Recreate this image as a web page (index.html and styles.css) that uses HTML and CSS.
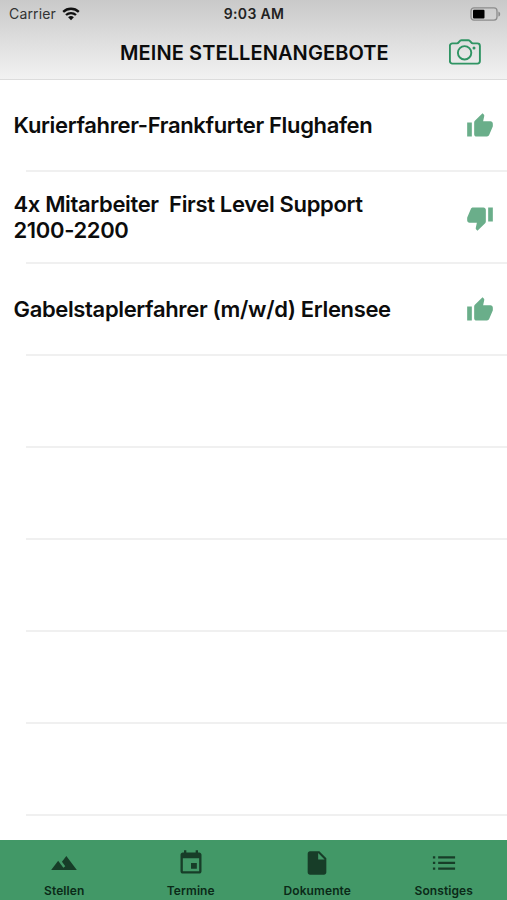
FILE: index.html
```
<!DOCTYPE html>
<html lang="de">
<head>
  <meta charset="UTF-8">
  <meta name="viewport" content="width=device-width, initial-scale=1.0">
  <title>Meine Stellenangebote</title>
  <link rel="stylesheet" href="styles.css">
</head>
<body>
  <header class="header">
    <div class="status-bar">
      <div class="carrier">
        <span>Carrier</span>
        <svg viewBox="0 0 18 14" width="18" height="14">
          <path d="M1.2 4.9C5.6.7 12.4.7 16.8 4.9M4 8C6.8 5.4 11.2 5.4 14 8" fill="none" stroke="#111" stroke-width="2.3"/>
          <path d="M9 13.3 6.1 10.3a4.2 4.2 0 0 1 5.8 0z" fill="#111"/>
        </svg>
      </div>
      <span class="time">9:03 AM</span>
      <svg class="battery" viewBox="0 0 31 14" width="31" height="14">
        <rect x="1" y="0.9" width="26" height="12.2" rx="3" fill="none" stroke="#8c8c8c" stroke-width="1.3"/>
        <rect x="3" y="2.7" width="11.5" height="8.8" rx="1" fill="#000"/>
        <path d="M28.4 4.4c2.4.7 2.4 4.5 0 5.2z" fill="#8c8c8c"/>
      </svg>
    </div>
    <div class="title-bar">
      <h1>MEINE STELLENANGEBOTE</h1>
      <svg viewBox="0 0 32 26" width="32" height="26" fill="none" stroke="#2f9463" stroke-width="1.9">
        <path d="M3.4 4.4H8c2 0 2.2-3.2 4.4-3.2h7c2.2 0 2.4 3.2 4.4 3.2h4.6a2.5 2.5 0 0 1 2.5 2.5v15.2a2.5 2.5 0 0 1-2.5 2.5h-25a2.5 2.5 0 0 1-2.500-2.500V6.900a2.500 2.500 0 0 1 2.500-2.500z"/>
        <circle cx="15.6" cy="13.8" r="6.7"/>
        <circle cx="25" cy="8.9" r="1.5" fill="#2f9463" stroke="none"/>
      </svg>
    </div>
  </header>

  <!-- Job list -->
  <ul class="job-list">
    <li class="job">
      <span class="job-title">Kurierfahrer-Frankfurter Flughafen</span>
      <svg class="thumb" viewBox="0 0 24 24">
        <path d="M1 21h4V9H1v12zm22-11c0-1.100-.9-2-2-2h-6.310l.95-4.570.03-.32c0-.41-.17-.79-.44-1.060L14.170 1 7.590 7.590C7.220 7.950 7 8.450 7 9v10c0 1.100.9 2 2 2h9c.83 0 1.540-.5 1.840-1.220l3.020-7.050c.09-.23.14-.47.14-.73v-2z"/>
      </svg>
    </li>
    <li class="job">
      <span class="job-title">4x Mitarbeiter&nbsp; First Level Support<br>2100-2200</span>
      <svg class="thumb" viewBox="0 0 24 24">
        <path d="M15 3H6c-.83 0-1.540.5-1.840 1.220l-3.020 7.050c-.09.23-.14.47-.14.73v2c0 1.100.9 2 2 2h6.310l-.95 4.570-.03.32c0 .41.17.79.44 1.060L9.830 23l6.590-6.590c.36-.36.58-.86.58-1.410V5c0-1.100-.9-2-2-2zm4 0v12h4V3h-4z"/>
      </svg>
    </li>
    <li class="job">
      <span class="job-title">Gabelstaplerfahrer (m/w/d) Erlensee</span>
      <svg class="thumb" viewBox="0 0 24 24">
        <path d="M1 21h4V9H1v12zm22-11c0-1.100-.9-2-2-2h-6.310l.95-4.570.03-.32c0-.41-.17-.79-.44-1.060L14.170 1 7.590 7.590C7.220 7.950 7 8.450 7 9v10c0 1.100.9 2 2 2h9c.83 0 1.540-.5 1.840-1.220l3.020-7.050c.09-.23.14-.47.14-.73v-2z"/>
      </svg>
    </li>
    <li class="job"></li>
    <li class="job"></li>
    <li class="job"></li>
    <li class="job"></li>
    <li class="job"></li>
  </ul>

  <!-- Bottom navigation -->
  <nav class="tab-bar">
    <a class="tab">
      <svg viewBox="0 0 24 24"><path d="M14 6l-3.750 5 2.850 3.800-1.600 1.200C9.810 13.750 7 10 7 10l-6 8h22L14 6z"/></svg>
      <span>Stellen</span>
    </a>
    <a class="tab">
      <svg viewBox="0 0 24 24"><path d="M17 12h-5v5h5v-5zM16 1v2H8V1H6v2H5c-1.110 0-1.990.9-1.990 2L3 19c0 1.100.89 2 2 2h14c1.100 0 2-.9 2-2V5c0-1.100-.9-2-2-2h-1V1h-2zm3 18H5V8h14v11z"/></svg>
      <span>Termine</span>
    </a>
    <a class="tab">
      <svg viewBox="0 0 24 24"><path d="M6 2c-1.100 0-1.990.9-1.990 2L4 20c0 1.100.89 2 1.990 2H18c1.100 0 2-.9 2-2V8l-6-6H6zm7 7V3.500L18.500 9H13z"/></svg>
      <span>Dokumente</span>
    </a>
    <a class="tab">
      <svg viewBox="0 0 24 24"><path d="M2.500 6.200h2v1.900h-2zM2.500 11h2v1.900h-2zM2.500 15.800h2v1.900h-2zM7 6.200h14.500v1.900H7zM7 11h14.500v1.900H7zM7 15.800h14.500v1.900H7z"/></svg>
      <span>Sonstiges</span>
    </a>
  </nav>
</body>
</html>
```

FILE: styles.css
```
* {
  box-sizing: border-box;
}
body {
  margin: 0;
  height: 900px;
  display: flex;
  flex-direction: column;
  overflow: hidden;
  background: #fff;
  color: #0c0c0c;
  font-family: Inter, "Liberation Sans", sans-serif;
}
.header {
  height: 80px;
  flex: none;
  background: linear-gradient(#c9c9c9, #f2f2f2);
  border-bottom: 1px solid #dcdcdc;
}
.status-bar {
  height: 27px;
  padding: 0 6px 0 9px;
  display: grid;
  grid-template-columns: 1fr auto 1fr;
  align-items: center;
  font-size: 14px;
}
.carrier {
  display: flex;
  align-items: center;
  gap: 6px;
  color: #333;
  letter-spacing: 0.15px;
}
.time {
  margin-right: 2px;
  font-weight: 600;
  letter-spacing: 0.3px;
  color: #222;
}
.battery {
  justify-self: end;
}
.title-bar {
  height: 52px;
  padding: 0 26px 2px 120px;
  display: flex;
  align-items: center;
  justify-content: space-between;
}
h1 {
  margin: 2px 0 0;
  font-size: 20px;
  font-weight: 600;
  letter-spacing: 0.1px;
  white-space: nowrap;
}
.job-list {
  flex: 1;
  min-height: 0;
  margin: 0;
  padding: 0;
  overflow: hidden;
  list-style: none;
}
.job {
  height: 92px;
  padding: 0 13px 1px 13.5px;
  display: flex;
  align-items: center;
  justify-content: space-between;
  background: linear-gradient(#f0f0f0, #f0f0f0) 26px 100% / 100% 2px no-repeat;
}
.job-title {
  margin-bottom: 1px;
  font-size: 22px;
  font-weight: 600;
  line-height: 26px;
  letter-spacing: -0.35px;
  white-space: nowrap;
}
.thumb {
  width: 28px;
  height: 28px;
  flex: none;
  fill: #6aae8a;
}
.tab-bar {
  height: 60px;
  padding-left: 1px;
  flex: none;
  display: flex;
  background: #429867;
}
.tab {
  flex: 1;
  padding-top: 9px;
  display: flex;
  flex-direction: column;
  align-items: center;
  gap: 6px;
  color: #0b2a18;
  font-size: 12px;
  font-weight: 600;
  line-height: 15px;
  letter-spacing: 0.1px;
}
.tab svg {
  width: 28px;
  height: 28px;
  fill: #173d28;
}
```
